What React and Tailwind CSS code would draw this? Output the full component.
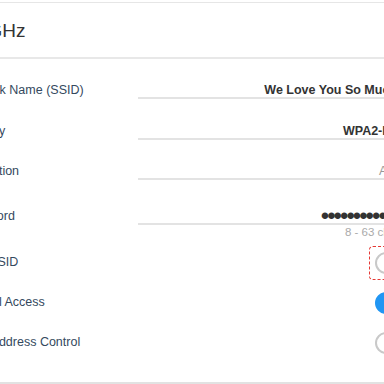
import { useState } from "react";

const font = { fontFamily: '"Liberation Sans", Arial, sans-serif' };

function Row({ label, children, extra }) {
  return (
    <div className="flex items-start">
      <div className="w-[178px] h-[40px] pt-[3px] flex items-center text-[12.5px] text-[#34495e] shrink-0">
        {label}
      </div>
      <div className="w-[273px]">
        {children}
        {extra}
      </div>
    </div>
  );
}

function Field({ value, pad, className = "" }) {
  return (
    <div className={"h-[30px] border-b-2 border-[#e3e3e3] pt-[13px] text-right " + pad}>
      <div className={"leading-[16px] whitespace-nowrap " + className}>{value}</div>
    </div>
  );
}

function Toggle({ on, focused }) {
  const track = on
    ? "w-[36px] h-[22px] rounded-full bg-[#2196f3] border-2 border-[#2196f3]"
    : "w-[36px] h-[22px] rounded-full bg-white border-2 border-[#c9c9c9]";
  if (focused) {
    return (
      <span className="-m-[6px] p-[5px] border border-dashed border-[#e53935] rounded-[4px] flex">
        <span className={track} />
      </span>
    );
  }
  return <span className={track} />;
}

export default function App() {
  const [toggles] = useState({ hide: false, access: true, mac: false });

  return (
    <div className="w-[384px] h-[384px] overflow-hidden bg-white" style={font}>
      <div className="ml-[-40px] w-[460px] mt-[2px] border-t border-[#e6e6e6]">
        {/* HEADER */}
        <div className="h-[56px] pt-[2px] flex items-center border-b-2 border-[#e8e8e8]">
          <span className="ml-[17px] text-[19px] text-[#333]">5GHz</span>
        </div>

        {/* FORM */}
        <div className="pt-[10px] pb-[21px] border-b-[3px] border-[#e2e2e2]">
          <Row label="Network Name (SSID)">
            <Field value="We Love You So Much" pad="pr-[14px]" className="font-bold text-[12.5px] text-[#333]" />
          </Row>
          <div className="mt-[1px]">
            <Row label="Security">
              <Field value="WPA2-PSK" pad="pr-[3px]" className="font-bold text-[12.5px] text-[#333]" />
            </Row>
          </div>
          <Row label="Encryption">
            <Field value="AES" pad="pr-[7px]" className="text-[12.5px] text-[#999]" />
          </Row>
          <div className="mt-[5px]">
            <Row
              label="Password"
              extra={
                <div className="ml-[207px] text-[11.5px] leading-[14px] text-[#aaa] whitespace-nowrap">
                  8 - 63 characters
                </div>
              }
            >
              <Field value="•••••••••••••" pad="pr-[7px]" className="text-[24px] tracking-[-2px] text-[#333] h-[16px] overflow-visible" />
            </Row>
          </div>
          <div className="mt-[2px]">
            <Row label="Hide SSID">
              <div className="h-[40px] pt-[3px] flex items-center justify-end">
                <Toggle on={toggles.hide} focused />
              </div>
            </Row>
          </div>
          <Row label="Internal Access">
            <div className="h-[40px] pt-[3px] flex items-center justify-end">
              <Toggle on={toggles.access} />
            </div>
          </Row>
          <Row label="MAC Address Control">
            <div className="h-[40px] pt-[3px] flex items-center justify-end">
              <Toggle on={toggles.mac} />
            </div>
          </Row>
        </div>
      </div>
    </div>
  );
}
